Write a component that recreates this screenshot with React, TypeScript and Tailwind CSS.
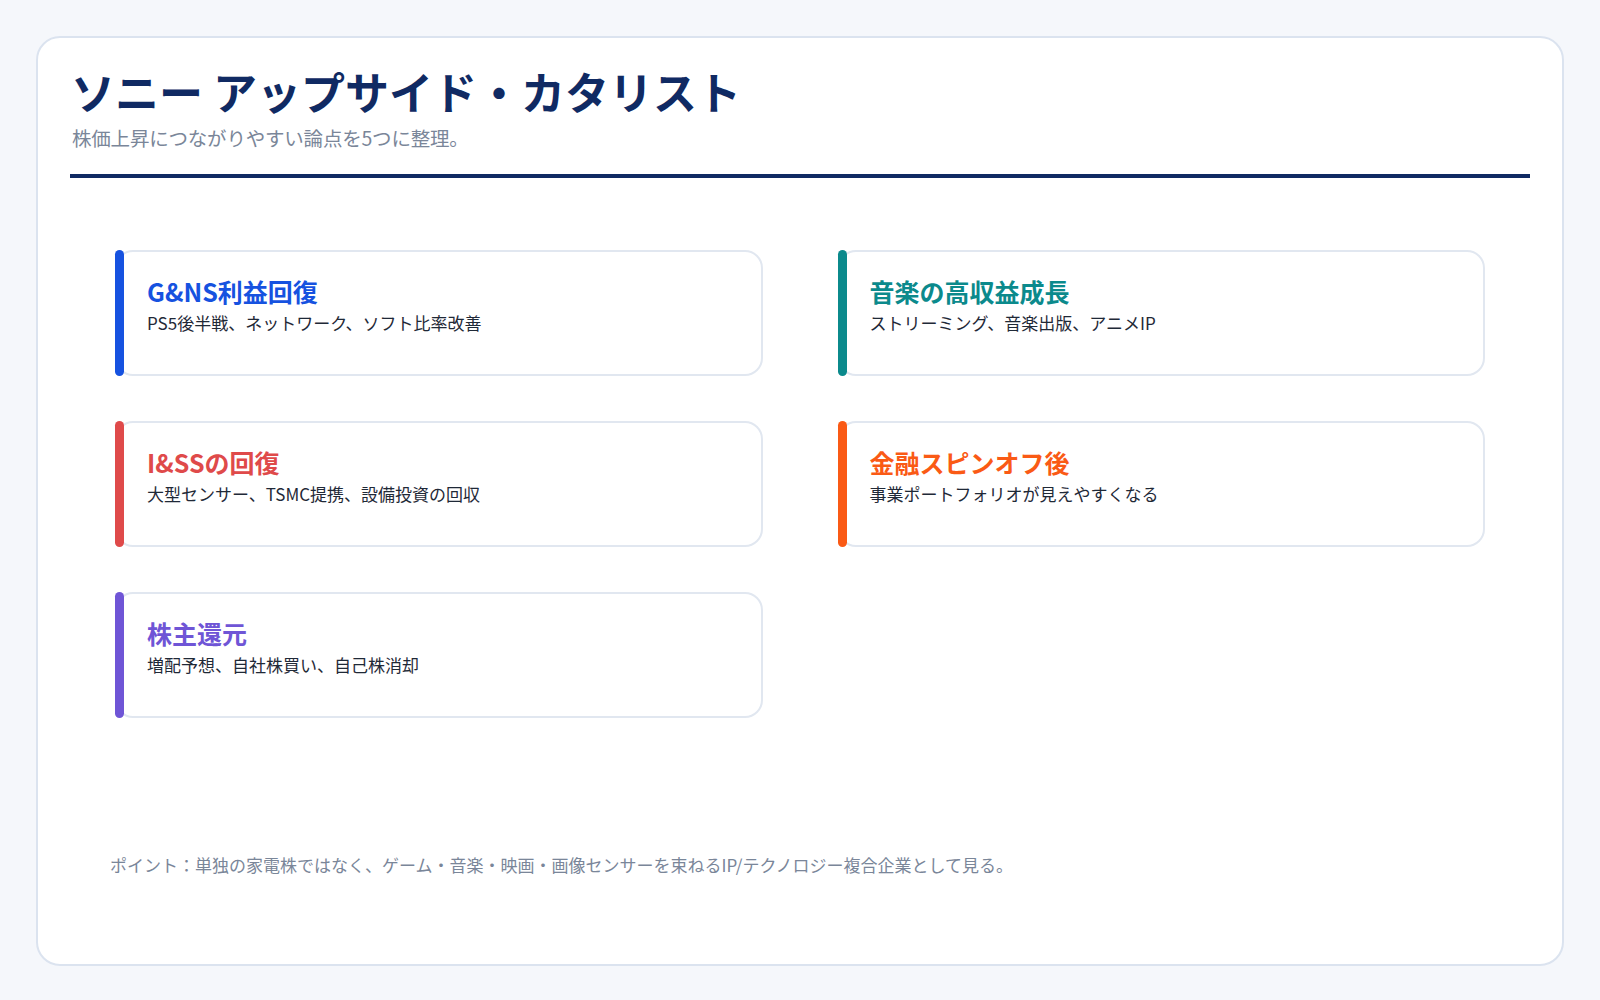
const items = [
  { t: "G&NS利益回復", d: "PS5後半戦、ネットワーク、ソフト比率改善", c: "text-[#1652e0]", b: "bg-[#1652e0]" },
  { t: "音楽の高収益成長", d: "ストリーミング、音楽出版、アニメIP", c: "text-[#0b8a8c]", b: "bg-[#0b8a8c]" },
  { t: "I&SSの回復", d: "大型センサー、TSMC提携、設備投資の回収", c: "text-[#df4a4a]", b: "bg-[#df4a4a]" },
  { t: "金融スピンオフ後", d: "事業ポートフォリオが見えやすくなる", c: "text-[#fa5a15]", b: "bg-[#fa5a15]" },
  { t: "株主還元", d: "増配予想、自社株買い、自己株消却", c: "text-[#6f55d6]", b: "bg-[#6f55d6]" },
];

export default function App() {
  return (
    <div className="min-h-[1000px] bg-[#f5f7fb] p-[36px] pb-[34px]" style={{ fontFamily: '"Noto Sans CJK JP", "Noto Sans", sans-serif' }}>
      <div className="h-[930px] rounded-[24px] border-2 border-[#dbe3ef] bg-white px-[32px] pt-[23px] flex flex-col">
        <h1 className="text-[44px] font-bold leading-[60px] text-[#102a63] pl-[1px]">ソニー アップサイド・カタリスト</h1>
        <p className="mt-[4px] text-[19.5px] leading-[26px] text-[#7a8699] pl-[2px] tracking-[-0.2px]">株価上昇につながりやすい論点を5つに整理。</p>
        <div className="mt-[23px] h-[4px] bg-[#102a63]" />
        <div className="mt-[72px] px-[45px] grid grid-cols-2 gap-x-[75px] gap-y-[45px]">
          {items.map((it) => (
            <div key={it.t} className="relative h-[126px] rounded-[18px] border-2 border-[#e1e7f0] bg-white pl-[30px] pt-[22px]">
              <div className={`absolute left-[-2px] top-[-2px] bottom-[-2px] w-[9px] rounded-full ${it.b}`} />
              <div className={`text-[25px] font-bold leading-[34px] ${it.c}`}>{it.t}</div>
              <div className="mt-[3px] text-[17px] leading-[24px] text-[#1f2937]">{it.d}</div>
            </div>
          ))}
        </div>
        <p className="mt-[134px] pl-[40px] text-[17px] text-[#7a8699]">ポイント：単独の家電株ではなく、ゲーム・音楽・映画・画像センサーを束ねるIP/テクノロジー複合企業として見る。</p>
      </div>
    </div>
  );
}
